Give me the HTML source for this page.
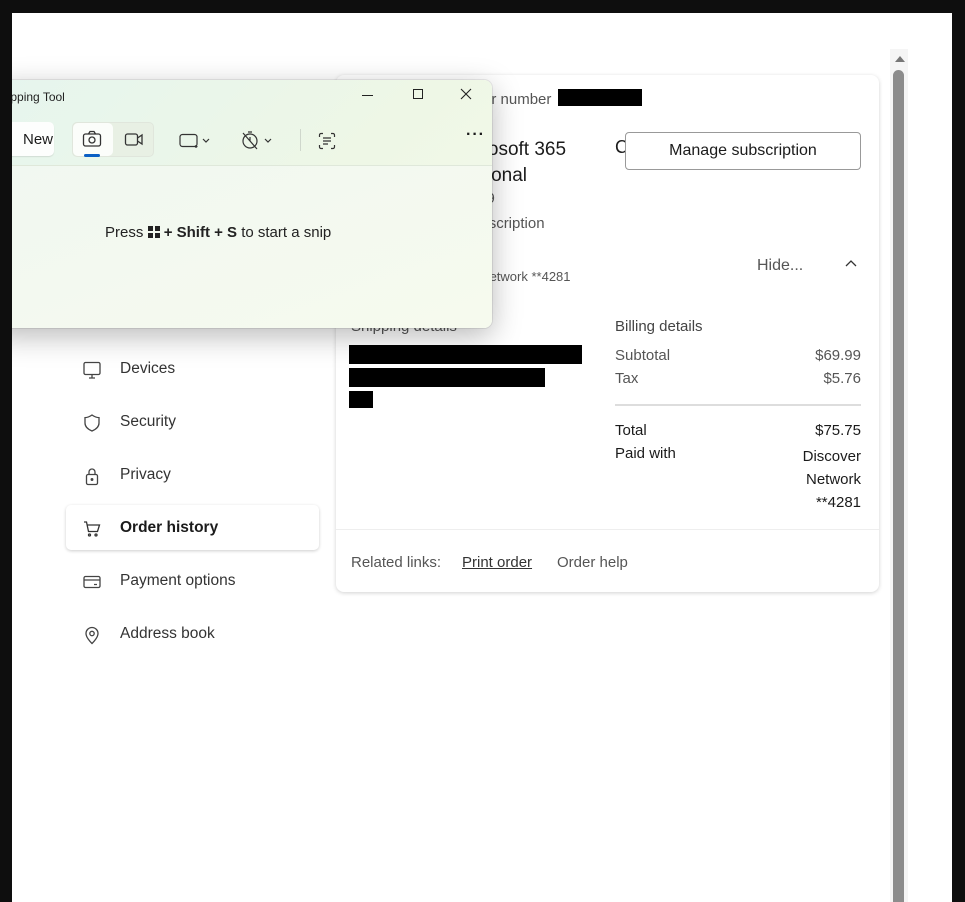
<!DOCTYPE html>
<html><head><meta charset="utf-8"><style>
*{box-sizing:border-box;margin:0;padding:0}
body{width:965px;height:902px;background:#0e0e0e;position:relative;overflow:hidden;font-family:"Liberation Sans",sans-serif;color:#1b1b1b}
#page{position:absolute;left:12px;top:13px;width:940px;height:889px;background:#fff;overflow:hidden}
.abs{position:absolute}
.card{position:absolute;left:324px;top:62px;width:543px;height:517px;background:#fff;border-radius:8px;box-shadow:0 1px 4px rgba(0,0,0,.18)}
.t{position:absolute;font-size:15px;white-space:nowrap;color:#1b1b1b}
.g{color:#555}
.r{text-align:right}
.nav{position:absolute;left:70px;font-size:15.5px;color:#333}
.blk{position:absolute;background:#000}
#snip{position:absolute;left:-20px;top:67px;width:500px;height:248px;border-radius:8px;background:linear-gradient(135deg,#e6f5ee 0%,#eef7e6 60%,#f4f9ea 100%);box-shadow:0 8px 30px rgba(0,0,0,.28),0 0 0 1px rgba(0,0,0,.08);overflow:hidden}
#snip .body{position:absolute;left:0;top:85px;width:100%;height:163px;background:linear-gradient(160deg,#f1f8f1,#f6faee);border-top:1px solid #dfe8da}
</style></head><body>
<div id="page">
  <div class="abs" style="left:878px;top:36px;width:18px;height:860px;background:#f5f5f5"></div>
  <div class="abs" style="left:883px;top:43px;width:0;height:0;border-left:5px solid transparent;border-right:5px solid transparent;border-bottom:6px solid #777"></div>
  <div class="abs" style="left:881px;top:57px;width:11px;height:840px;background:#8c8c8c;border-radius:6px"></div>

  <svg class="abs" style="left:70px;top:347px" width="20" height="20" viewBox="0 0 20 20" fill="none" stroke="#444" stroke-width="1.3"><rect x="2" y="2.5" width="16" height="12" rx="1.5"/><path d="M7 18h6M10 14.5v3.5"/></svg>
  <div class="nav" style="left:108px;top:347px">Devices</div>
  <svg class="abs" style="left:70px;top:400px" width="20" height="20" viewBox="0 0 20 20" fill="none" stroke="#444" stroke-width="1.3"><path d="M10 2c2.5 1.8 4.8 2.6 7 2.6V10c0 4-3.2 6.4-7 8-3.8-1.6-7-4-7-8V4.6C5.2 4.6 7.5 3.8 10 2z"/></svg>
  <div class="nav" style="left:108px;top:400px">Security</div>
  <svg class="abs" style="left:70px;top:453px" width="20" height="20" viewBox="0 0 20 20" fill="none" stroke="#444" stroke-width="1.3"><rect x="4.5" y="8.5" width="11" height="10" rx="1.5"/><path d="M7 8.5V6a3 3 0 0 1 6 0v2.5"/><circle cx="10" cy="13.5" r=".8" fill="#444"/></svg>
  <div class="nav" style="left:108px;top:453px">Privacy</div>
  <div class="abs" style="left:54px;top:492px;width:253px;height:45px;background:#fff;border-radius:5px;box-shadow:0 1px 3px rgba(0,0,0,.2)"></div>
  <svg class="abs" style="left:70px;top:506px" width="20" height="20" viewBox="0 0 20 20" fill="none" stroke="#333" stroke-width="1.3"><path d="M2 3h2.5l2 9.5h9L17.5 6H5.2"/><circle cx="7.5" cy="16" r="1"/><circle cx="14" cy="16" r="1"/></svg>
  <div class="nav" style="left:108px;top:506px;font-weight:bold;color:#1b1b1b">Order history</div>
  <svg class="abs" style="left:70px;top:559px" width="20" height="20" viewBox="0 0 20 20" fill="none" stroke="#444" stroke-width="1.3"><rect x="2" y="4.5" width="16" height="11" rx="1.5"/><path d="M2 8h16M12 12.5h3"/></svg>
  <div class="nav" style="left:108px;top:559px">Payment options</div>
  <svg class="abs" style="left:70px;top:612px" width="20" height="20" viewBox="0 0 20 20" fill="none" stroke="#444" stroke-width="1.3"><path d="M10 18.5c-3.5-3.5-6-6.5-6-10a6 6 0 0 1 12 0c0 3.5-2.5 6.5-6 10z"/><circle cx="10" cy="8.5" r="2.2"/></svg>
  <div class="nav" style="left:108px;top:612px">Address book</div>

  <div class="card">
    <div class="t g" style="left:122px;top:16px">Order number</div>
    <div class="blk" style="left:222px;top:14px;width:84px;height:17px"></div>
    <div class="t" style="left:116px;top:62px;font-size:19px;line-height:26px;white-space:normal;width:180px">Microsoft 365 Personal</div>
    <div class="t g" style="left:113px;top:115px">$69.99</div>
    <div class="t g" style="left:126px;top:140px">Subscription</div>
    <div class="t g" style="left:90px;top:194px;font-size:13px">Discover Network **4281</div>
    <div class="t" style="left:279px;top:62px;font-size:18px">C</div>
    <div class="abs" style="left:289px;top:57px;width:236px;height:38px;border:1px solid #999;border-radius:4px;background:#fff;font-size:16px;text-align:center;line-height:36px">Manage subscription</div>
    <div class="t g" style="left:421px;top:182px;font-size:16px">Hide...</div>
    <svg class="abs" style="left:509px;top:184px" width="12" height="10" viewBox="0 0 12 10" fill="none" stroke="#333" stroke-width="1.3"><path d="M1 7l5-5 5 5"/></svg>

    <div class="t g" style="left:15px;top:243px">Shipping details</div>
    <div class="blk" style="left:13px;top:270px;width:233px;height:19px"></div>
    <div class="blk" style="left:13px;top:293px;width:196px;height:19px"></div>
    <div class="blk" style="left:13px;top:316px;width:24px;height:17px"></div>

    <div class="t" style="left:279px;top:243px;color:#444">Billing details</div>
    <div class="t g" style="left:279px;top:272px">Subtotal</div>
    <div class="t g" style="left:279px;top:295px">Tax</div>
    <div class="t g r" style="right:18px;top:272px">$69.99</div>
    <div class="t g r" style="right:18px;top:295px">$5.76</div>
    <div class="abs" style="left:279px;top:329px;width:246px;height:2px;background:#ddd"></div>
    <div class="t" style="left:279px;top:347px">Total</div>
    <div class="t" style="left:279px;top:370px">Paid with</div>
    <div class="t r" style="right:18px;top:347px">$75.75</div>
    <div class="t r" style="right:18px;top:370px;line-height:23px">Discover<br>Network<br>**4281</div>

    <div class="abs" style="left:0;top:454px;width:543px;height:1px;background:#eee"></div>
    <div class="t g" style="left:15px;top:479px">Related links:</div>
    <div class="t" style="left:126px;top:479px;color:#333;text-decoration:underline">Print order</div>
    <div class="t g" style="left:221px;top:479px">Order help</div>
  </div>

  <div id="snip">
    <div class="t" style="left:1px;top:10px;font-size:12px;color:#222">Snipping Tool</div>
    <div class="abs" style="left:370px;top:15px;width:11px;height:1px;background:#222"></div>
    <div class="abs" style="left:421px;top:9px;width:10px;height:10px;border:1px solid #222"></div>
    <svg class="abs" style="left:468px;top:8px" width="12" height="12" viewBox="0 0 12 12" stroke="#222" stroke-width="1.1"><path d="M1 1l10 10M11 1L1 11"/></svg>
    <div class="abs" style="left:0;top:42px;width:62px;height:34px;background:#fdfefd;border-radius:5px;box-shadow:0 1px 1px rgba(0,0,0,.1)"></div>
    <div class="t" style="left:31px;top:51px;font-size:15px">New</div>
    <div class="abs" style="left:80px;top:42px;width:82px;height:35px;background:#e8f0e4;border-radius:5px;border:1px solid #e0e6dc"></div>
    <div class="abs" style="left:81px;top:43px;width:40px;height:33px;background:#fbfdfa;border-radius:5px"></div>
    <svg class="abs" style="left:90px;top:50px" width="20" height="18" viewBox="0 0 20 18" fill="none" stroke="#333" stroke-width="1.3"><rect x="1.5" y="4" width="17" height="12" rx="2"/><path d="M6.5 4l1.5-2.5h4L13.5 4"/><circle cx="10" cy="10" r="3"/></svg>
    <div class="abs" style="left:92px;top:74px;width:16px;height:3px;background:#0a5fc4;border-radius:2px"></div>
    <svg class="abs" style="left:132px;top:52px" width="20" height="16" viewBox="0 0 20 16" fill="none" stroke="#333" stroke-width="1.3"><rect x="1.5" y="2" width="12" height="11" rx="2"/><path d="M13.5 6l4.5-3v9l-4.5-3"/></svg>
    <svg class="abs" style="left:187px;top:53px" width="32" height="16" viewBox="0 0 32 16" fill="none" stroke="#333" stroke-width="1.2"><rect x="1" y="1.5" width="17" height="12" rx="2.5"/><path d="M17 12v3M15.5 13.5h3"/><path d="M24 6l3 3 3-3"/></svg>
    <svg class="abs" style="left:248px;top:50px" width="36" height="20" viewBox="0 0 36 20" fill="none" stroke="#333" stroke-width="1.2"><circle cx="10" cy="11" r="7"/><path d="M8 2h4M3 3l14 16M10 7v4"/><path d="M25 9l3 3 3-3"/></svg>
    <div class="abs" style="left:308px;top:49px;width:1px;height:22px;background:#cfd7cc"></div>
    <svg class="abs" style="left:326px;top:52px" width="18" height="18" viewBox="0 0 18 18" fill="none" stroke="#333" stroke-width="1.2"><path d="M1.5 5V3a1.5 1.5 0 0 1 1.5-1.5h2M13 1.5h2A1.5 1.5 0 0 1 16.5 3v2M16.5 13v2a1.5 1.5 0 0 1-1.5 1.5h-2M5 16.5H3A1.5 1.5 0 0 1 1.5 15v-2M5 6h8M5 9h8M5 12h5"/></svg>
    <div class="t" style="left:474px;top:46px;font-size:16px;font-weight:bold;letter-spacing:1px">···</div>
    <div class="body"></div>
    <div class="t" style="left:113px;top:144px;font-size:15px;color:#222">Press <span style="display:inline-block;width:12px;height:12px;vertical-align:-1px;background:linear-gradient(#222,#222) 0 0/5px 5px no-repeat,linear-gradient(#222,#222) 7px 0/5px 5px no-repeat,linear-gradient(#222,#222) 0 7px/5px 5px no-repeat,linear-gradient(#222,#222) 7px 7px/5px 5px no-repeat"></span> <b>+ Shift + S</b> to start a snip</div>
  </div>
</div>
</body></html>
